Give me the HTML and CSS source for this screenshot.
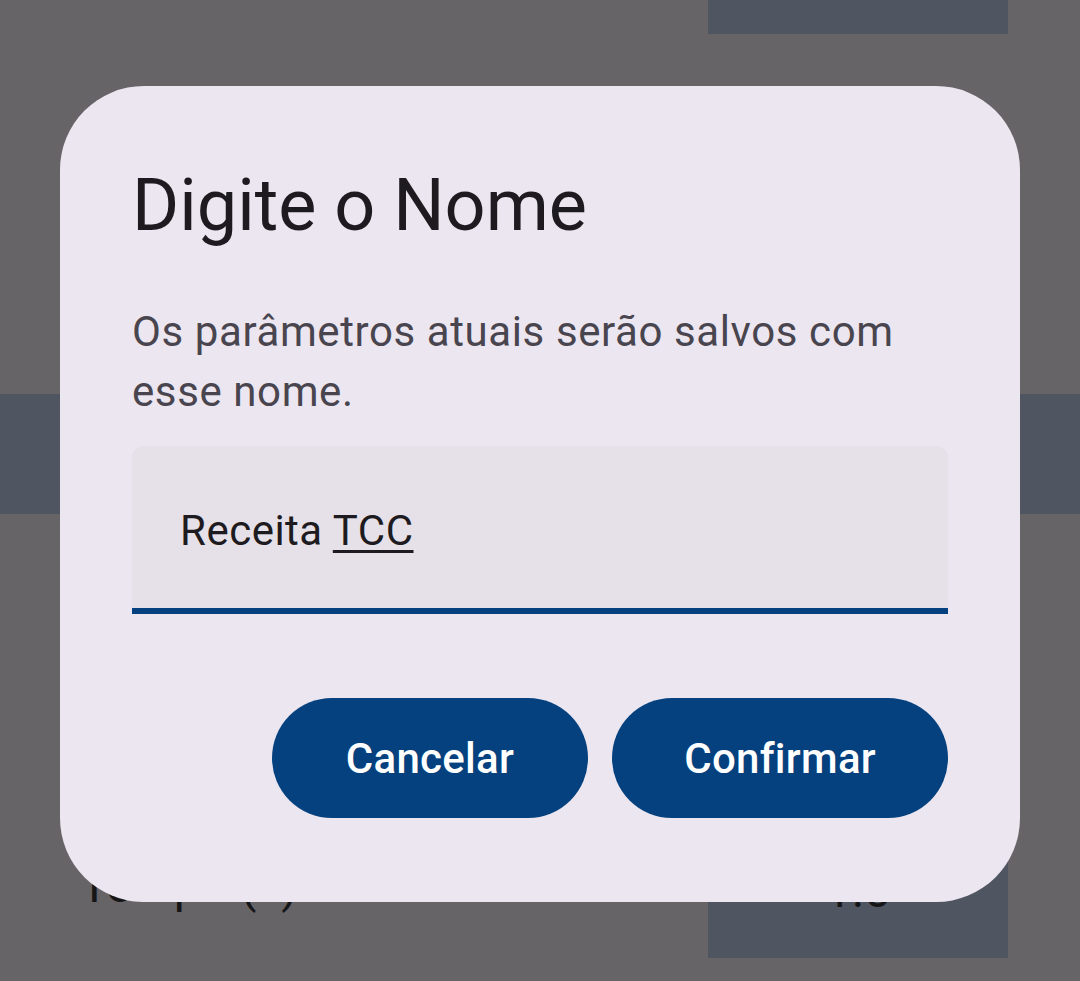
FILE: index.html
```html
<!DOCTYPE html>
<html lang="pt">
<head>
<meta charset="utf-8">
<title>Digite o Nome</title>
<link rel="stylesheet" href="styles.css">
</head>
<body>
<main class="app">
  <div class="row row-top">
    <div class="cell"></div>
  </div>
  <div class="spacer spacer-a"></div>
  <div class="row row-band"></div>
  <div class="spacer spacer-b"></div>
  <div class="row row-param">
    <span class="param-label">Tempo (s)</span>
    <div class="cell cell-value">1.0</div>
  </div>
</main>

<div class="scrim">
  <section class="dialog" role="dialog" aria-labelledby="dlg-title">
    <h1 class="dialog-title" id="dlg-title">Digite o Nome</h1>
    <p class="dialog-text">Os parâmetros atuais serão salvos com esse nome.</p>
    <div class="field">
      <span class="field-value">Receita <span class="composing">TCC</span></span>
    </div>
    <div class="actions">
      <button class="btn" type="button">Cancelar</button>
      <button class="btn" type="button">Confirmar</button>
    </div>
  </section>
</div>
</body>
</html>
```

FILE: styles.css
```css
html, body {
  margin: 0;
  padding: 0;
}

body {
  width: 1080px;
  height: 981px;
  overflow: hidden;
  background: #666467;
  font-family: Roboto, "Noto Sans", "Liberation Sans", sans-serif;
}

.app {
  display: flex;
  flex-direction: column;
}

.row {
  display: flex;
  align-items: center;
  justify-content: flex-end;
  padding-right: 72px;
}

.row-top {
  height: 34px;
}

.row-top .cell {
  width: 300px;
  height: 34px;
  background: #4f5561;
}

.spacer-a {
  height: 360px;
}

.row-band {
  height: 120px;
  background: #4f5561;
  padding: 0;
}

.spacer-b {
  height: 324px;
}

.row-param {
  height: 120px;
  justify-content: space-between;
  padding-left: 80px;
}

.param-label {
  font-size: 48px;
  color: #161518;
  padding-bottom: 25px;
}

.cell-value {
  width: 300px;
  height: 120px;
  background: #4f5561;
  display: flex;
  align-items: center;
  justify-content: center;
  font-size: 48px;
  color: #161518;
  padding-bottom: 16px;
  box-sizing: border-box;
}

.scrim {
  position: fixed;
  inset: 0;
  display: flex;
  justify-content: center;
  align-items: flex-start;
  padding-top: 86px;
}

.dialog {
  width: 960px;
  box-sizing: border-box;
  padding: 72px 72px 84px;
  background: #ece6f0;
  border-radius: 84px;
}

.dialog-title {
  margin: 0;
  font-size: 72px;
  font-weight: 400;
  line-height: 96px;
  color: #1d1b20;
}

.dialog-text {
  margin: 48px 0 0;
  font-size: 42px;
  line-height: 60px;
  letter-spacing: 0.6px;
  color: #49454f;
}

.field {
  margin-top: 24px;
  height: 168px;
  box-sizing: border-box;
  display: flex;
  align-items: center;
  padding: 6px 48px 0;
  background: #e6e0e9;
  border-radius: 12px 12px 0 0;
  border-bottom: 6px solid #05417e;
}

.field-value {
  font-size: 42px;
  letter-spacing: 0.5px;
  color: #1d1b20;
}

.composing {
  text-decoration: underline;
  text-decoration-thickness: 3px;
  text-underline-offset: 5px;
}

.actions {
  margin-top: 84px;
  display: flex;
  justify-content: flex-end;
  gap: 24px;
}

.btn {
  height: 120px;
  padding: 0 72px;
  border: none;
  border-radius: 60px;
  background: #05417e;
  color: #ffffff;
  font-family: Roboto, "Noto Sans", "Liberation Sans", sans-serif;
  font-size: 42px;
  font-weight: 500;
  letter-spacing: 0.3px;
}

.btn:first-child {
  padding: 0 74px;
}
```
